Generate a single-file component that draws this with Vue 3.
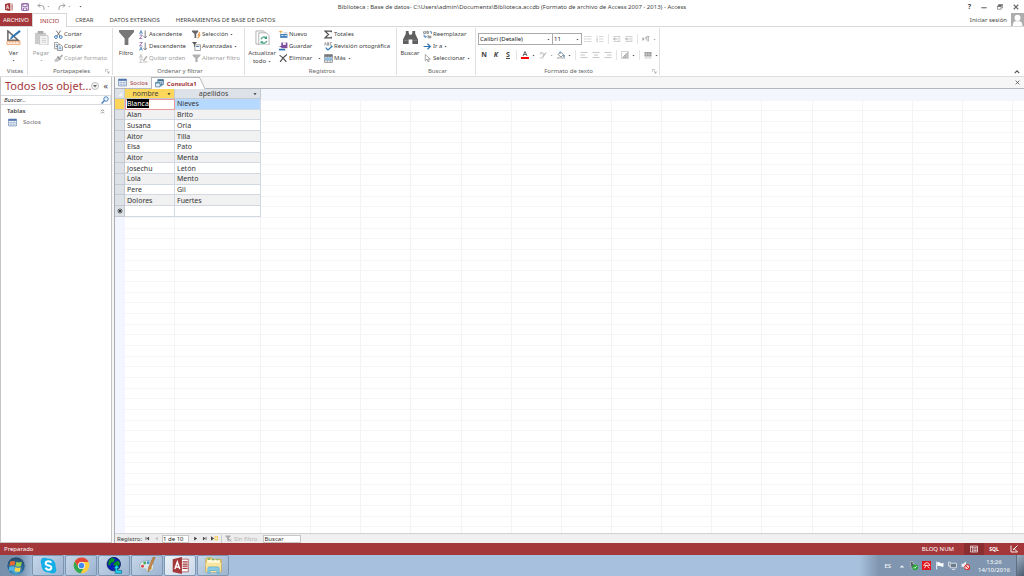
<script setup>
import { ref } from 'vue'

const icons = {
  access: '<rect x="5" y="2" width="10" height="12" fill="#fff" stroke="#a4373a"/><path d="M9 4.500h5M9 7h5M9 9.500h5M9 12h5" stroke="#a4373a"/><path d="M0 2l10-2v16L0 14z" fill="#a4373a"/><path d="M2.500 12L5 4l2.500 8M3.500 9.500h3" fill="none" stroke="#fff" stroke-width="1.400"/>',
  save: '<path d="M1.500 1.500h13v13h-13z" fill="#fff" stroke="#80509c" stroke-width="2"/><path d="M4 2h8v5H4zM5 10h6v5H5z" fill="#fff" stroke="#80509c" stroke-width="1.500"/>',
  undo: '<path d="M6 1L2 5l4 4M2 5h7q5 0 5 5v4" fill="none" stroke="#a0a0a0" stroke-width="2"/>',
  redo: '<path d="M10 1l4 4-4 4M14 5H7q-5 0-5 5v4" fill="none" stroke="#a0a0a0" stroke-width="2"/>',
  view: '<path d="M2 1v10h11z" fill="#fff" stroke="#666" stroke-width="1.600"/><path d="M6 8L15 1" stroke="#2e75b6" stroke-width="2.200"/><path d="M4 10l1.500-3 1.500 2z" fill="#2e75b6"/><path d="M1 12h14v3.500H1z" fill="#fdeadd" stroke="#e89a62" stroke-width=".8"/><path d="M4 12v2M7 12v2M10 12v2M13 12v2" stroke="#e89a62" stroke-width=".7"/>',
  paste: '<path d="M1 3h12v12H1z" fill="#cbcbcb"/><path d="M4 1h6v3H4z" fill="#aaa"/><path d="M6 6h9v10H6z" fill="#f8f8f8" stroke="#c4c4c4"/><path d="M8 9h5M8 11h5M8 13h5" stroke="#ccc"/>',
  cut: '<path d="M4 1l7 10M12 1L5 11" stroke="#666" stroke-width="1.600"/><circle cx="3.500" cy="12.500" r="2.500" fill="none" stroke="#2e75b6" stroke-width="1.600"/><circle cx="12" cy="12.500" r="2.500" fill="none" stroke="#2e75b6" stroke-width="1.600"/>',
  copy: '<path d="M1 1h6l3 3v8H1z" fill="#fff" stroke="#777" stroke-width="1.200"/><path d="M6 5h6l3 3v7H6z" fill="#fff" stroke="#666" stroke-width="1.200"/><path d="M3 5h3M3 8h3M8 9h5M8 12h5" stroke="#2e75b6" stroke-width="1.300"/>',
  brush: '<path d="M10 5l4-4 2 2-4 4z" fill="#aaa"/><path d="M7 3l6 6-3 2-5-5z" fill="#999"/><path d="M5 6l5 5q-4 4-9 3 2-1 1-2-1 0-2-2 3 0 5-4z" fill="#c2c2c2"/>',
  funnel: '<path d="M0 0h16v2L10 9v7H6V9L0 2z" fill="#777"/>',
  funnelDim: '<path d="M1 1h14v2L10 8v6H6V8L1 3z" fill="#b2b2b2"/>',
  asc: '<path d="M1 7l2.500-6L6 7M2 5h3" fill="none" stroke="#2e75b6" stroke-width="1.300"/><path d="M1 9h5l-5 6h5" fill="none" stroke="#80509c" stroke-width="1.300"/><path d="M11 1v13M8 11l3 3 3-3" fill="none" stroke="#666" stroke-width="1.500"/>',
  desc: '<path d="M1 1h5L1 7h5" fill="none" stroke="#80509c" stroke-width="1.300"/><path d="M1 15l2.500-6L6 15M2 13h3" fill="none" stroke="#2e75b6" stroke-width="1.300"/><path d="M11 1v13M8 11l3 3 3-3" fill="none" stroke="#666" stroke-width="1.500"/>',
  unsort: '<path d="M1 7l2.500-6L6 7M2 5h3M1 9h5l-5 6h5" fill="none" stroke="#b0b0b0" stroke-width="1.300"/><path d="M14 4l-6 8" stroke="#b0b0b0" stroke-width="2.500"/><path d="M7 14h8" stroke="#c4c4c4" stroke-width="2"/>',
  selection: '<path d="M0 1h11v2L7.500 7v7h-3V7L0 3z" fill="#666"/><path d="M14 4l-3 5h3l-4 6" fill="none" stroke="#eb8c35" stroke-width="1.800"/>',
  advanced: '<path d="M0 0h9L5.500 4v5h-2V4z" fill="#555"/><path d="M5 5h10v10H5z" fill="#fff" stroke="#777" stroke-width="1.200"/><path d="M7 8h6" stroke="#2e75b6" stroke-width="1.500"/>',
  refresh: '<path d="M1 1h8l3 3v11H1z" fill="#fff" stroke="#999" stroke-width=".8"/><path d="M4 3h8l3 3v10H4z" fill="#fff" stroke="#999" stroke-width=".8"/><path d="M6.500 10a3.200 3.200 0 0 1 5.500-1.500M12.500 11.500A3.200 3.200 0 0 1 7 13" fill="none" stroke="#5aab88" stroke-width="1.500"/><path d="M12.800 6.500v3h-3zM6 15v-3h3z" fill="#359a70"/>',
  add: '<path d="M2 7h13v7H2z" fill="#4683b8"/><path d="M4 9h4v1H4zM10 9h4v1h-4z" fill="#fff"/><path d="M3 1v5M0 3h6" stroke="#e7a533" stroke-width="1.600"/><path d="M8 5h7" stroke="#999"/>',
  saveRecord: '<path d="M4 1h11v10H4z" fill="#80509c"/><path d="M7 1h5v4H7z" fill="#fff"/><path d="M0 12h11v3H0z" fill="#2e75b6"/><path d="M1 8h5" stroke="#80509c" stroke-width="2"/>',
  remove: '<path d="M1 2q6 4 12 12M14 1Q7 6 2 14" fill="none" stroke="#4d4d4d" stroke-width="2"/>',
  sigma: '<path d="M13 4V2H2l6 6-6 6h11v-2" fill="none" stroke="#505050" stroke-width="2.200"/>',
  spell: '<path d="M1 6l1.500-5L4 6M6 1v5h2V1zM14 1h-3v5h3" fill="none" stroke="#666"/><path d="M3 10l4 4 8-7" fill="none" stroke="#2e75b6" stroke-width="2.300"/>',
  more: '<path d="M1 1h14v14H1z" fill="#fff" stroke="#777" stroke-width="1.200"/><path d="M1 5h14M6 1v14M11 1v14M1 12h14" stroke="#888"/><path d="M1 1h14v4H1z" fill="#777"/><path d="M1 6h14v5H1z" fill="#8fbce0"/>',
  binoculars: '<path d="M3 1h3v2l1 2h2l1-2V1h3v3l3 6v5h-6v-5H6v5H0v-5l3-6z" fill="#606060"/><path d="M1 11h4M11 11h4" stroke="#888"/>',
  replace: '<path d="M1 3h4v3H1zM7 1v5h3V3H7M9 9v5h3v-3H9M15 11h-2v3h2" fill="none" stroke="#666" stroke-width="1.200"/><path d="M2 8v4h4M4 10l2 2-2 2M12 3h3v4" fill="none" stroke="#2e75b6" stroke-width="1.400"/>',
  goto: '<path d="M1 8h12M8 3l5 5-5 5" fill="none" stroke="#2e75b6" stroke-width="2.200"/>',
  pointer: '<path d="M4 1v11l3-3 2 5 2-1-2-4h4z" fill="#fff" stroke="#777" stroke-width="1.100"/>',
  bullets: '<path d="M1 3h2M1 8h2M1 13h2" stroke="#aaa" stroke-width="2"/><path d="M5 3h10M5 8h10M5 13h10" stroke="#bcbcbc" stroke-width="1.200"/>',
  numbers: '<path d="M2 1v4M1 7h2v2H1v2h2M1 13h2v2" fill="none" stroke="#aaa"/><path d="M6 3h9M6 8h9M6 13h9" stroke="#bcbcbc" stroke-width="1.200"/>',
  outdent: '<path d="M1 3h14M9 6.500h6M9 10h6M1 13h14" stroke="#b4b4b4" stroke-width="1.200"/><path d="M8 8H1M4 5L1 8l3 3" fill="none" stroke="#999" stroke-width="1.400"/>',
  direction: '<path d="M1 4l4 4-4 4z" fill="#999"/><path d="M10 13V4q-4 0-3 3 1 2 3 1M13 3v10M9 3h6" fill="none" stroke="#999" stroke-width="1.300"/>',
  fontColor: '<path d="M4 10L8 1l4 9M5.500 7h5" fill="none" stroke="#555" stroke-width="1.800"/><path d="M0 12h16v4H0z" fill="#f00"/>',
  highlight: '<path d="M2 7l2-5 2 5M8 2v5h3" fill="none" stroke="#aaa" stroke-width="1.200"/><path d="M14 2L7 10l-2 3 4-1 6-8z" fill="#bbb"/><path d="M1 14h8" stroke="#ccc" stroke-width="2"/>',
  bucket: '<path d="M7 2l6 5-5 5-6-5z" fill="#fff" stroke="#666" stroke-width="1.400"/><path d="M6 1v5M14 8q2 3 0 4-2-1 0-4" fill="none" stroke="#2e75b6" stroke-width="1.500"/><path d="M1 13h14v3H1z" fill="#ededed" stroke="#888" stroke-width=".8"/>',
  left: '<path d="M1 3h14M1 8h9M1 13h14" stroke="#aaa" stroke-width="1.300"/>',
  center: '<path d="M1 3h14M4 8h8M1 13h14" stroke="#aaa" stroke-width="1.300"/>',
  right: '<path d="M1 3h14M6 8h9M1 13h14" stroke="#aaa" stroke-width="1.300"/>',
  altColor: '<path d="M1 1h14v14H1z" fill="#fff" stroke="#aaa"/><path d="M3 13L13 3v10z" fill="#ddd" stroke="#888"/><path d="M8 8v5M10 6v7" stroke="#888"/>',
  gridlines: '<path d="M1 2h14v9H1z" fill="#999"/><path d="M1 6.500h14M5 2v9M10 2v9" stroke="#fff" stroke-width=".7"/><path d="M1 14h14" stroke="#bbb" stroke-width="1.500"/>',
  table: '<path d="M1 2h14v12H1z" fill="#fff" stroke="#6c8bb5" stroke-width="1.300"/><path d="M1 2h14v3H1z" fill="#3f67a5"/><path d="M1 8h14M1 11h14M5.500 3v11M10.500 3v11" stroke="#86a0c3"/>',
  query: '<path d="M5 1h10v9H5z" fill="#d8e8f0" stroke="#456f9e" stroke-width="1.300"/><path d="M5 1h10v3H5z" fill="#3f7090"/><path d="M1 6h8v8H1z" fill="#e6f1f7" stroke="#456f9e" stroke-width="1.300"/><path d="M1 6h8v2H1z" fill="#4c8ca3"/><path d="M12 5v7H9" fill="none" stroke="#3f7090" stroke-width="1.500"/>',
  search: '<circle cx="10" cy="6" r="4.500" fill="#eef6ff" stroke="#3b76b8" stroke-width="1.800"/><path d="M7 9l-6 6" stroke="#3b76b8" stroke-width="2.300"/>',
  user: '<path d="M0 0h16v16H0z" fill="#adadad"/><circle cx="8" cy="6" r="3.700" fill="#fff"/><path d="M2 16q0-6 4-6h4q4 0 4 6z" fill="#fff"/>',
  restore: '<path d="M4 5V2h11v8h-3M1 6h10v8H1z" fill="none" stroke="#666" stroke-width="1.800"/><path d="M1 6h10M4 3h11" stroke="#666" stroke-width="3"/>',
  close: '<path d="M2 2l12 12M14 2L2 14" stroke="#666" stroke-width="3"/>',
  down: '<path d="M2 5h12l-6 7z" fill="currentColor"/>',
  dialog: '<path d="M1 10V2h9M6 6l7 7M13 7v6H7" fill="none" stroke="#888" stroke-width="1.600"/>',
  first: '<path d="M3 3v10" stroke="#444" stroke-width="2.200"/><path d="M13 2v12L5 8z" fill="#444"/>',
  prev: '<path d="M12 2v12L4 8z" fill="#c0c0c0"/>',
  next: '<path d="M4 2v12l9-6z" fill="#333"/>',
  last: '<path d="M3 2v12l8-6z" fill="#444"/><path d="M13 3v10" stroke="#444" stroke-width="2.200"/>',
  newRecord: '<path d="M0 3v10l7-5z" fill="#444"/><path d="M8 3h8v9H8z" fill="#f5ca54"/><path d="M10 7.500h4" stroke="#fff" stroke-width="3"/>',
  noFilter: '<path d="M1 1h12v2L9 7v6H5V7L1 3z" fill="#aaa"/><path d="M9 9l6 6M15 9l-6 6" stroke="#999" stroke-width="1.600"/>',
  sheet: '<path d="M1 2h14v12H1z" fill="none" stroke="#fff" stroke-width="1.300"/><path d="M1 5h14M5 2v12M5 8h10M5 11h10M10 5v9" stroke="#fff"/>',
  design: '<path d="M2 1v13h13L8 7" fill="none" stroke="#fff" stroke-width="1.800"/><path d="M6 10l9-9" stroke="#fff" stroke-width="2"/>',
}

const bigIcons = {
  skype: '<circle cx="12" cy="12" r="10" fill="#13aee8"/><circle cx="6.500" cy="6.500" r="5.500" fill="#13aee8"/><circle cx="17.500" cy="17.500" r="5.500" fill="#13aee8"/><path d="M16 8q-1-2-4-2-4 0-4 3 0 2 4 3t4 3q0 3-4 3-3 0-4-3" fill="none" stroke="#fff" stroke-width="2.800"/>',
  chrome: '<circle cx="12" cy="12" r="11" fill="#ffce3f"/><path d="M2.500 6.500A11 11 0 0 1 22 7H12a5 5 0 0 0-4.500 7.500z" fill="#e5483b"/><path d="M2.500 6.500A11 11 0 0 0 11 23l4.500-8.500a5 5 0 0 1-8 0z" fill="#33a853"/><circle cx="12" cy="12" r="5" fill="#fff"/><circle cx="12" cy="12" r="4" fill="#4588ee"/>',
  globe: '<circle cx="11" cy="10" r="9.500" fill="#0820b8" stroke="#001050"/><path d="M4 5l4-4 5 2-2 4-4 1-1 4-3-1zM12 8l5-3 3 4-3 5-3 2-1-4-3-1z" fill="#079526"/><path d="M15 11l4 5h-3v3h6v4h-9v-7h-2z" fill="#18d9ed" stroke="#064f75" stroke-width=".8"/>',
  paint: '<path d="M1 14Q0 6 10 5q11-1 11 7 0 8-8 9-4 0-3-3 0-2-3-1-5 1-6-3z" fill="#dce7ec" stroke="#8caab9"/><circle cx="5" cy="13" r="2" fill="#dc443c"/><circle cx="8" cy="8.500" r="2" fill="#4ba959"/><circle cx="13" cy="8" r="2" fill="#3894d2"/><circle cx="16" cy="16" r="2" fill="#e8bd44"/><path d="M23 0l-7 17-3 4 0-5 7-16z" fill="#ce8841" stroke="#8b5e35" stroke-width=".7"/>',
  accessApp: '<path d="M12 3h11v18H12z" fill="#fff" stroke="#a4373a"/><path d="M15 7h7M15 10h7M15 13h7M15 16h7" stroke="#a4373a" stroke-width="1.700"/><path d="M1 3l13-3v24L1 21z" fill="#a4373a"/><path d="M4 17L7.500 7l3.500 10M5.500 14h4" fill="none" stroke="#fff" stroke-width="2"/>',
  explorer: '<path d="M1 3l2-2h6l2 2h12v18H1z" fill="#e8c766" stroke="#c5a448"/><path d="M3 4h18v5H3z" fill="#fff9d9"/><path d="M4 3h3M10 4h3M16 4h3" stroke="#4cae72" stroke-width="1.500"/><path d="M1 8h22l-1 13H2z" fill="#f9e69c"/><path d="M4 23v-7q0-2 2-2h12q2 0 2 2v7h-3v-4H7v4z" fill="#8ccbe8" stroke="#5ba9cb"/>',
}

const tabs = ['INICIO', 'CREAR', 'DATOS EXTERNOS', 'HERRAMIENTAS DE BASE DE DATOS']
const apps = [
  { icon: 'skype', name: 'Skype' },
  { icon: 'chrome', name: 'Chrome' },
  { icon: 'globe', name: 'Red' },
  { icon: 'paint', name: 'Paint' },
  { icon: 'accessApp', name: 'Access', active: true },
  { icon: 'explorer', name: 'Explorador' },
]

const groups = [
  { name: 'Vistas', cls: 'g-views', big: { icon: 'view', label: 'Ver', arrow: true }, cols: [] },
  {
    name: 'Portapapeles', cls: 'g-clip', dialog: true,
    big: { icon: 'paste', label: 'Pegar', arrow: true, dim: true },
    cols: [[
      { icon: 'cut', label: 'Cortar' },
      { icon: 'copy', label: 'Copiar' },
      { icon: 'brush', label: 'Copiar formato', dim: true },
    ]],
  },
  {
    name: 'Ordenar y filtrar', cls: 'g-sort', big: { icon: 'funnel', label: 'Filtro' },
    cols: [
      [
        { icon: 'asc', label: 'Ascendente' },
        { icon: 'desc', label: 'Descendente' },
        { icon: 'unsort', label: 'Quitar orden', dim: true },
      ],
      [
        { icon: 'selection', label: 'Selección', arrow: true },
        { icon: 'advanced', label: 'Avanzadas', arrow: true },
        { icon: 'funnelDim', label: 'Alternar filtro', dim: true },
      ],
    ],
  },
  {
    name: 'Registros', cls: 'g-records', big: { icon: 'refresh', label: 'Actualizar', second: 'todo', arrow: true },
    cols: [
      [
        { icon: 'add', label: 'Nuevo' },
        { icon: 'saveRecord', label: 'Guardar' },
        { icon: 'remove', label: 'Eliminar', arrow: true, split: true },
      ],
      [
        { icon: 'sigma', label: 'Totales' },
        { icon: 'spell', label: 'Revisión ortográfica' },
        { icon: 'more', label: 'Más', arrow: true },
      ],
    ],
  },
  {
    name: 'Buscar', cls: 'g-find', big: { icon: 'binoculars', label: 'Buscar' },
    cols: [[
      { icon: 'replace', label: 'Reemplazar' },
      { icon: 'goto', label: 'Ir a', arrow: true },
      { icon: 'pointer', label: 'Seleccionar', arrow: true },
    ]],
  },
]

const rows = [
  ['Blanca', 'Nieves'], ['Alan', 'Brito'], ['Susana', 'Oria'], ['Aitor', 'Tilla'], ['Elsa', 'Pato'],
  ['Aitor', 'Menta'], ['Josechu', 'Letón'], ['Lola', 'Mento'], ['Pere', 'Gil'], ['Dolores', 'Fuertes'],
]

const navSearch = ref('')
const record = ref('1 de 10')
const recordSearch = ref('')
</script>

<template>
  <div class="window">
    <header class="titlebar">
      <div class="quick">
        <svg class="ic" viewBox="0 0 16 16" v-html="icons.access" />
        <button aria-label="Guardar"><svg class="ic" viewBox="0 0 16 16" v-html="icons.save" /></button>
        <button aria-label="Deshacer"><svg class="ic" viewBox="0 0 16 16" v-html="icons.undo" /><svg class="arr pale" viewBox="0 0 16 16" v-html="icons.down" /></button>
        <button aria-label="Rehacer"><svg class="ic" viewBox="0 0 16 16" v-html="icons.redo" /><svg class="arr pale" viewBox="0 0 16 16" v-html="icons.down" /></button>
        <button aria-label="Personalizar"><svg class="arr" viewBox="0 0 16 16" v-html="icons.down" /></button>
      </div>
      <h1>Biblioteca : Base de datos- C:\Users\admin\Documents\Biblioteca.accdb (Formato de archivo de Access 2007 - 2013) - Access</h1>
      <div class="controls">
        <button class="help">?</button>
        <button aria-label="Minimizar"><svg class="win" viewBox="0 0 16 16"><path d="M1 10h14" stroke="#666" stroke-width="3" /></svg></button>
        <button aria-label="Restaurar"><svg class="win" viewBox="0 0 16 16" v-html="icons.restore" /></button>
        <button aria-label="Cerrar"><svg class="win" viewBox="0 0 16 16" v-html="icons.close" /></button>
      </div>
    </header>

    <nav class="tabs">
      <button class="file">ARCHIVO</button>
      <button v-for="(t, i) in tabs" :key="t" :class="{ on: i === 0 }">{{ t }}</button>
      <a class="signin" href="#">Iniciar sesión</a>
      <svg class="avatar" viewBox="0 0 16 16" v-html="icons.user" />
    </nav>

    <section class="ribbon">
      <div v-for="g in groups" :key="g.name" class="group" :class="g.cls">
        <div class="tools">
          <button class="big" :class="{ dim: g.big.dim }">
            <svg viewBox="0 0 16 16" v-html="icons[g.big.icon]" />
            <span>{{ g.big.label }}</span>
            <span v-if="g.big.second" class="second">{{ g.big.second }}<svg class="arr" viewBox="0 0 16 16" v-html="icons.down" /></span>
            <svg v-else-if="g.big.arrow" class="arr" viewBox="0 0 16 16" v-html="icons.down" />
          </button>
          <div v-for="(c, i) in g.cols" :key="i" class="col">
            <button v-for="b in c" :key="b.label" class="small" :class="{ dim: b.dim, split: b.split }">
              <svg class="ic" viewBox="0 0 16 16" v-html="icons[b.icon]" />
              <span>{{ b.label }}</span>
              <svg v-if="b.arrow" class="arr" viewBox="0 0 16 16" v-html="icons.down" />
            </button>
          </div>
        </div>
        <footer>{{ g.name }}<svg v-if="g.dialog" class="dialog" viewBox="0 0 16 16" v-html="icons.dialog" /></footer>
      </div>

      <div class="group g-format">
        <div class="format">
          <div class="frow">
            <label class="combo font">
              <select aria-label="Fuente"><option>Calibri (Detalle)</option></select>
              <svg class="arr" viewBox="0 0 16 16" v-html="icons.down" />
            </label>
            <label class="combo size">
              <select aria-label="Tamaño"><option>11</option></select>
              <svg class="arr" viewBox="0 0 16 16" v-html="icons.down" />
            </label>
            <button aria-label="Viñetas"><svg class="ic" viewBox="0 0 16 16" v-html="icons.bullets" /></button>
            <button aria-label="Numeración"><svg class="ic" viewBox="0 0 16 16" v-html="icons.numbers" /></button>
            <i />
            <button aria-label="Reducir sangría"><svg class="ic" viewBox="0 0 16 16" v-html="icons.outdent" /></button>
            <button aria-label="Aumentar sangría"><svg class="ic" viewBox="0 0 16 16" v-html="icons.outdent" /></button>
            <i />
            <button aria-label="Dirección"><svg class="ic" viewBox="0 0 16 16" v-html="icons.direction" /><svg class="arr pale" viewBox="0 0 16 16" v-html="icons.down" /></button>
          </div>
          <div class="frow second-row">
            <button class="letter"><b>N</b></button>
            <button class="letter"><b><em>K</em></b></button>
            <button class="letter"><b><u>S</u></b></button>
            <i />
            <button aria-label="Color de fuente"><svg class="ic" viewBox="0 0 16 16" v-html="icons.fontColor" /><svg class="arr" viewBox="0 0 16 16" v-html="icons.down" /></button>
            <button aria-label="Resaltado"><svg class="ic" viewBox="0 0 16 16" v-html="icons.highlight" /><svg class="arr pale" viewBox="0 0 16 16" v-html="icons.down" /></button>
            <button aria-label="Color de fondo"><svg class="ic" viewBox="0 0 16 16" v-html="icons.bucket" /><svg class="arr" viewBox="0 0 16 16" v-html="icons.down" /></button>
            <i />
            <button aria-label="Izquierda"><svg class="ic" viewBox="0 0 16 16" v-html="icons.left" /></button>
            <button aria-label="Centro"><svg class="ic" viewBox="0 0 16 16" v-html="icons.center" /></button>
            <button aria-label="Derecha"><svg class="ic" viewBox="0 0 16 16" v-html="icons.right" /></button>
            <i />
            <button aria-label="Color alternativo"><svg class="ic" viewBox="0 0 16 16" v-html="icons.altColor" /><svg class="arr" viewBox="0 0 16 16" v-html="icons.down" /></button>
            <i />
            <button aria-label="Líneas de cuadrícula"><svg class="ic" viewBox="0 0 16 16" v-html="icons.gridlines" /><svg class="arr" viewBox="0 0 16 16" v-html="icons.down" /></button>
          </div>
        </div>
        <footer>Formato de texto<svg class="dialog" viewBox="0 0 16 16" v-html="icons.dialog" /></footer>
      </div>
      <button class="collapse" aria-label="Contraer la cinta"><svg viewBox="0 0 16 16"><path d="M2 11l6-6 6 6" fill="none" stroke="#555" stroke-width="3" /></svg></button>
    </section>

    <main class="body">
      <aside class="nav">
        <div class="nav-head">
          <h2>Todos los objet...</h2>
          <button aria-label="Opciones"><svg viewBox="0 0 16 16"><circle cx="8" cy="8" r="7" fill="#f4f4f4" stroke="#999" stroke-width="1.200" /><path d="M4 6h8l-4 5z" fill="#666" /></svg></button>
          <button class="chev">«</button>
        </div>
        <div class="nav-search">
          <input v-model="navSearch" aria-label="Buscar objetos" placeholder="Buscar...">
          <button aria-label="Buscar"><svg viewBox="0 0 16 16" v-html="icons.search" /></button>
        </div>
        <button class="nav-group"><span>Tablas</span><svg viewBox="0 0 16 16"><path d="M3 7l5-5 5 5M3 14l5-5 5 5" fill="none" stroke="#555" stroke-width="2" /></svg></button>
        <a class="nav-item" href="#"><svg viewBox="0 0 16 16" v-html="icons.table" />Socios</a>
      </aside>

      <section class="doc">
        <div class="doc-tabs">
          <button class="dtab"><svg viewBox="0 0 16 16" v-html="icons.table" />Socios</button>
          <button class="dtab current"><svg viewBox="0 0 16 16" v-html="icons.query" />Consulta1</button>
          <button class="doc-close" aria-label="Cerrar"><svg viewBox="0 0 16 16"><path d="M2 2l12 12M14 2L2 14" stroke="#444" stroke-width="2.400" /></svg></button>
        </div>
        <div class="sheet">
          <table>
            <colgroup><col class="c-sel"><col class="c-name"><col class="c-last"></colgroup>
            <thead>
              <tr>
                <th class="corner"><svg viewBox="0 0 16 16"><path d="M14 3v11H3z" fill="#f4f6f8" /></svg></th>
                <th class="active"><span class="th">nombre<svg class="arr" viewBox="0 0 16 16" v-html="icons.down" /></span></th>
                <th><span class="th">apellidos<svg class="arr" viewBox="0 0 16 16" v-html="icons.down" /></span></th>
              </tr>
            </thead>
            <tbody>
              <tr v-for="(r, i) in rows" :key="i" :class="{ cur: i === 0 }">
                <th />
                <td><mark v-if="i === 0">{{ r[0] }}</mark><template v-else>{{ r[0] }}</template></td>
                <td>{{ r[1] }}</td>
              </tr>
              <tr class="blank">
                <th><svg viewBox="0 0 16 16"><path d="M8 1v14M1 8h14M3 3l10 10M13 3L3 13" stroke="#222" stroke-width="2" /></svg></th>
                <td /><td />
              </tr>
            </tbody>
          </table>
        </div>
        <div class="recbar">
          <span class="reclabel">Registro:</span>
          <button aria-label="Primero"><svg viewBox="0 0 16 16" v-html="icons.first" /></button>
          <button aria-label="Anterior"><svg viewBox="0 0 16 16" v-html="icons.prev" /></button>
          <input v-model="record" class="recno" aria-label="Registro actual">
          <button aria-label="Siguiente"><svg viewBox="0 0 16 16" v-html="icons.next" /></button>
          <button aria-label="Último"><svg viewBox="0 0 16 16" v-html="icons.last" /></button>
          <button aria-label="Nuevo registro"><svg class="wide" viewBox="0 0 16 16" v-html="icons.newRecord" /></button>
          <button class="nofilter"><svg class="wide" viewBox="0 0 16 16" v-html="icons.noFilter" />Sin filtro</button>
          <input v-model="recordSearch" class="recfind" aria-label="Buscar registro" placeholder="Buscar">
          <div class="scroll" />
        </div>
      </section>
    </main>

    <footer class="status">
      <span>Preparado</span>
      <span class="lock">BLOQ NUM</span>
      <button class="pressed" aria-label="Vista Hoja de datos"><svg viewBox="0 0 16 16" v-html="icons.sheet" /></button>
      <button class="sql">SQL</button>
      <button aria-label="Vista Diseño"><svg viewBox="0 0 16 16" v-html="icons.design" /></button>
    </footer>

    <footer class="taskbar">
      <button class="start" aria-label="Inicio">
        <svg viewBox="0 0 24 24">
          <defs><radialGradient id="orb" cx=".5" cy=".75" r=".7"><stop offset="0" stop-color="#5cc6ec" /><stop offset=".5" stop-color="#2a6d9f" /><stop offset="1" stop-color="#294866" /></radialGradient></defs>
          <circle cx="12" cy="12" r="11" fill="url(#orb)" stroke="#7a9dbd" />
          <path d="M5 7q3-2 6-.5l-1 5q-3-1-6 .5z" fill="#ed6b32" />
          <path d="M12.500 7q3 1.500 6.500 0l-1 5q-3 1.500-6.500 0z" fill="#9cce47" />
          <path d="M4 13q3-1.500 6 0l-1 5q-3-1.500-6 0z" fill="#52b8e8" />
          <path d="M11.200 13.500q3 1.500 6.500 0l-1 5q-3 1-6.500-.5z" fill="#fcd446" />
        </svg>
      </button>
      <button v-for="a in apps" :key="a.name" class="app" :class="{ active: a.active }" :aria-label="a.name"><svg viewBox="0 0 24 24" v-html="bigIcons[a.icon]" /></button>
      <div class="tray">
        <span class="lang">ES</span>
        <svg class="up" viewBox="0 0 16 16"><path d="M2 12l6-6 6 6z" fill="#eef3f8" /></svg>
        <svg viewBox="0 0 16 16"><path d="M2 1h5v4h3v8H4z" fill="#555f68" stroke="#cdd5dc" /><circle cx="11" cy="11" r="5" fill="#25a735" /><path d="M8.500 11l2 2 3-4" fill="none" stroke="#fff" stroke-width="1.500" /></svg>
        <svg viewBox="0 0 16 16"><path d="M0 0h16v16H0z" fill="#e2141d" /><path d="M3 8q1-5 6-5 4 0 5 5-2-1-4 0-1-1-3 0-2-1-4 0zM8 7l-4 6M9 8l4 5" fill="none" stroke="#fff" stroke-width="1.400" /></svg>
        <svg viewBox="0 0 16 16"><path d="M3 1v14" stroke="#fff" stroke-width="1.600" /><path d="M4 2q3-1 5 1t6 0v7q-3 1-6-1-2-1-5 0z" fill="#fff" /></svg>
        <svg viewBox="0 0 16 16"><path d="M4 4h11v8H4zM7 15h6M1 2v7h3M1 2h4" fill="#6a7b8c" stroke="#edf1f5" stroke-width="1.400" /></svg>
        <svg viewBox="0 0 16 16"><path d="M1 5h3l5-4v13l-5-4H1z" fill="#eef1f4" /><circle cx="11" cy="11" r="4.300" fill="#fff" stroke="#e02828" stroke-width="1.800" /><path d="M8 8l6 6" stroke="#e02828" stroke-width="1.800" /></svg>
        <time>13:26<br>14/10/2016</time>
      </div>
      <button class="desktop" aria-label="Mostrar escritorio" />
    </footer>
  </div>
</template>

<style>
body { margin: 0; background: #fff; }
</style>

<style scoped>
.window { height: 100vh; display: flex; flex-direction: column; overflow: hidden; background: #fff; color: #444; font: 6px/8px "Noto Sans", "Open Sans", sans-serif; }
.window *, .window *::before { box-sizing: border-box; }
button, input, select { font: inherit; color: inherit; border: 0; background: none; padding: 0; margin: 0; border-radius: 0; outline: 0; }
button { display: flex; align-items: center; white-space: nowrap; }
a { color: inherit; text-decoration: none; }
svg { display: block; flex: none; }
h1, h2 { margin: 0; font-weight: 400; }
.ic { width: 8px; height: 8px; }
.arr { width: 3px; height: 3px; color: #555; }
.pale { color: #aaa; }

.titlebar { height: 13px; flex: none; display: grid; grid-template-columns: 1fr auto 1fr; align-items: center; }
.quick { display: flex; gap: 8px; padding-left: 5px; }
.quick button { gap: 2px; }
h1 { font-size: 6px; line-height: 8px; }
.controls { display: flex; justify-content: flex-end; gap: 10px; padding-right: 5px; }
.win { width: 6px; height: 6px; }
.help { font-weight: 700; font-size: 7px; }

.tabs { height: 14px; flex: none; display: flex; border-bottom: 1px solid #d8d8d8; }
.tabs button { padding: 0 8px; }
.tabs .file { width: 32px; padding: 0; justify-content: center; background: #a4373a; color: #fff; }
.tabs .on { height: 14px; padding: 0 7px; border: 1px solid #d8d8d8; border-bottom: 0; background: #fff; color: #a4373a; }
.signin { margin-left: auto; align-self: center; }
.avatar { width: 13px; height: 13px; margin-left: 4px; }

.ribbon { height: 50px; flex: none; display: flex; border-bottom: 1px solid #dedede; }
.group { display: flex; flex-direction: column; border-right: 1px solid #e1e1e1; padding-left: 3px; margin: 1px 0; }
.g-views { width: 28px; }
.g-clip { width: 85px; }
.g-sort { width: 132px; }
.g-records { width: 152px; }
.g-find { width: 79px; }
.g-format { width: 184px; padding-left: 2px; }
.tools { display: flex; height: 39px; gap: 3px; }
.group footer { display: flex; align-items: center; justify-content: center; height: 8px; color: #666; position: relative; }
.dialog { width: 5px; height: 5px; position: absolute; right: 2px; top: 2px; }
.big { flex-direction: column; width: 20px; padding-top: 2px; }
.big > svg:first-child { width: 15px; height: 15px; margin-bottom: 4px; }
.big .arr { margin-top: 2px; }
.g-records .big { width: 28px; }
.second { display: flex; gap: 2px; }
.second .arr { margin-top: 3px; }
.g-views .big { width: 21px; }
.col { display: flex; flex-direction: column; }
.g-sort .col:nth-child(2) { width: 50px; }
.g-records .col:nth-child(2) { width: 42px; }
.small { height: 12px; gap: 1px; }
.small .ic { width: 9px; height: 9px; }
.small .arr { margin-left: 1px; }
.small.split { width: 42px; }
.small.split .arr { margin-left: auto; }
.dim { color: #a0a0a0; }
.dim .arr { color: #b5b5b5; }
.format { height: 39px; padding-top: 5px; display: flex; flex-direction: column; gap: 4px; }
.frow { display: flex; align-items: center; height: 12px; gap: 4px; }
.frow button { gap: 3px; }
.frow i { width: 1px; height: 10px; background: #e4e4e4; }
.combo { position: relative; height: 12px; border: 1px solid #ababab; color: #222; }
.combo select { display: block; appearance: none; width: 100%; height: 10px; padding-left: 1px; font-size: 6px; }
.combo .arr { position: absolute; right: 2px; top: 4px; pointer-events: none; }
.font { width: 75px; margin-right: -5px; }
.size { width: 30px; margin-right: -2px; }
.second-row { padding-left: 2px; }
.letter { width: 8px; justify-content: center; font-size: 7px; }
.collapse { margin: auto 4px 1px auto; }
.collapse svg { width: 6px; height: 6px; }

.body { flex: 1; min-height: 0; display: flex; background: #f6f6f6; }
.nav { width: 112px; margin-right: 2px; background: #fff; border: 1px solid #c6c6c6; border-top: 0; display: flex; flex-direction: column; }
.nav-head { display: flex; align-items: center; height: 18px; padding: 0 3px 0 4px; gap: 4px; }
h2 { flex: 1; min-width: 0; font-size: 11px; line-height: 16px; color: #a4373a; white-space: nowrap; }
.nav-head svg { width: 8px; height: 8px; }
.chev { font-size: 9px; }
.nav-search { display: flex; align-items: center; height: 10px; border: 1px solid #d9dde2; border-left: 0; }
.nav-search input { flex: 1; min-width: 0; padding-left: 3px; font-style: italic; }
input::placeholder { color: #333; opacity: 1; }
.nav-search svg { width: 8px; height: 8px; margin-right: 1px; }
.nav-group { justify-content: space-between; height: 12px; padding: 0 6px; font-weight: 600; color: #444; }
.nav-group svg { width: 5px; height: 5px; }
.nav-item { display: flex; align-items: center; gap: 6px; height: 10px; padding-left: 7px; color: #666; }
.nav-item svg { width: 9px; height: 9px; }

.doc { flex: 1; min-width: 0; display: flex; flex-direction: column; border-left: 1px solid #a9adb3; }
.doc-tabs { height: 12px; flex: none; display: flex; border-bottom: 1px solid #b4b8bc; color: #a4373a; }
.dtab { gap: 3px; padding: 0 3px; position: relative; }
.dtab svg { width: 9px; height: 9px; }
.dtab.current { height: 12px; background: #fff; font-weight: 700; border-top: 1px solid #b4b8bc; border-left: 1px solid #b4b8bc; }
.current::before { content: ""; position: absolute; right: -3px; top: 0; width: 6px; height: 11px; background: #fff; border-right: 1px solid #b4b8bc; transform: skewX(25deg); z-index: 0; }
.doc-close { margin: 0 4px 0 auto; }
.doc-close svg { width: 5px; height: 5px; }
.sheet {
  flex: 1;
  min-height: 0;
  background-color: #fff;
  background-repeat: no-repeat;
  background-image:
    linear-gradient(#f4f6ff, #f4f6ff),
    linear-gradient(#f4f6ff, #f4f6ff),
    repeating-linear-gradient(#f5f5f5 0 1px, transparent 1px calc(32px / 3)),
    linear-gradient(#f5f5f5, #f5f5f5),
    repeating-linear-gradient(90deg, #f3f3f4 0 1px, transparent 1px calc(351px / 7));
  background-position: 0 0, 0 0, 0 0, 59px 0, 145px 0;
  background-size: 100% 11px, 10px 100%, 100% 100%, 1px 100%, 100% 100%;
}
table { border-collapse: separate; border-spacing: 0; table-layout: fixed; width: 146px; height: 128px; font-size: 7px; line-height: 9px; }
tr { height: 10px; }
.c-sel { width: 10px; }
.c-name { width: 50px; }
.c-last { width: 86px; }
th, td { padding: 0; font-weight: 400; text-align: left; border-right: 1px solid #d3d9e2; border-bottom: 1px solid #d3d9e2; }
td { padding-left: 2px; background: #fff; color: #333; }
tbody tr:nth-child(even) td { background: #f1f1f1; }
th { background: #dde2e8; border-color: #c5cad1; }
th .arr { width: 4px; height: 4px; position: absolute; right: 3px; color: #222; }
.th { display: flex; align-items: center; justify-content: center; position: relative; padding-right: 8px; }
thead .active { background: #fdd75a; }
.corner svg, .blank svg { width: 6px; height: 6px; margin: auto; }
.cur th { background: #ffd55c; }
.cur td:nth-child(2) { border: 1px solid #ee9999; padding-left: 1px; line-height: 8px; }
.cur td:last-child { background: #b5d9ff; }
mark { background: #000; color: #fff; }
.recbar { height: 10px; flex: none; display: flex; align-items: center; padding-left: 2px; background: #ededed; border-top: 1px solid #d0d3d8; }
.reclabel { width: 27px; }
.recbar button { margin-right: 3px; }
.recbar button svg { width: 5px; height: 5px; margin-left: 1px; }
.recbar button .wide { width: 7px; height: 7px; }
.recno { width: 27px; height: 8px; background: #fff; border: 1px solid #c8c8c8; margin-right: 3px; color: #222; }
.recbar .nofilter { color: #b4b4b4; gap: 2px; border-left: 1px solid #ccc; margin: 0 6px 0 0; padding-left: 2px; }
.recfind { width: 38px; height: 8px; background: #fff; border: 1px solid #c8c8c8; }
.scroll { flex: 1; height: 8px; background: #f1f1f2; }

.status { height: 12px; flex: none; display: flex; align-items: center; background: #a4373a; color: #fff; padding-left: 4px; }
.lock { margin-left: auto; margin-right: 10px; }
.status button { height: 12px; width: 20px; justify-content: center; }
.status svg { width: 8px; height: 8px; }
.status .pressed { background: #8b2e32; }
.status .sql { font-size: 5px; font-weight: 700; }

.taskbar { height: 21px; flex: none; display: flex; align-items: center; background: linear-gradient(90deg, #7990aa 0 20px, #a7c0dd 34px calc(100% - 165px), #8096b0 calc(100% - 145px)); }
.start { width: 31px; height: 21px; justify-content: center; }
.start svg { width: 20px; height: 20px; }
.app { width: 32px; height: 21px; margin-left: 1px; justify-content: center; border: 1px solid #7e95b0; border-radius: 2px; background: linear-gradient(135deg, #c5d6e9, #9db4d0); }
.app.active { background: linear-gradient(135deg, #eaf1f8, #cbd9ea); }
.app svg { width: 17px; height: 17px; }
.tray { margin-left: auto; display: flex; align-items: center; gap: 4px; color: #fff; }
.tray svg { width: 9px; height: 9px; }
.tray .up { width: 6px; height: 6px; }
.lang { margin-right: 4px; }
time { margin-left: 4px; text-align: center; }
.desktop { width: 8px; height: 21px; margin-left: 6px; background: linear-gradient(135deg, #9eb0c3, #4c5c70); border-left: 1px solid #5d6f84; }
</style>
